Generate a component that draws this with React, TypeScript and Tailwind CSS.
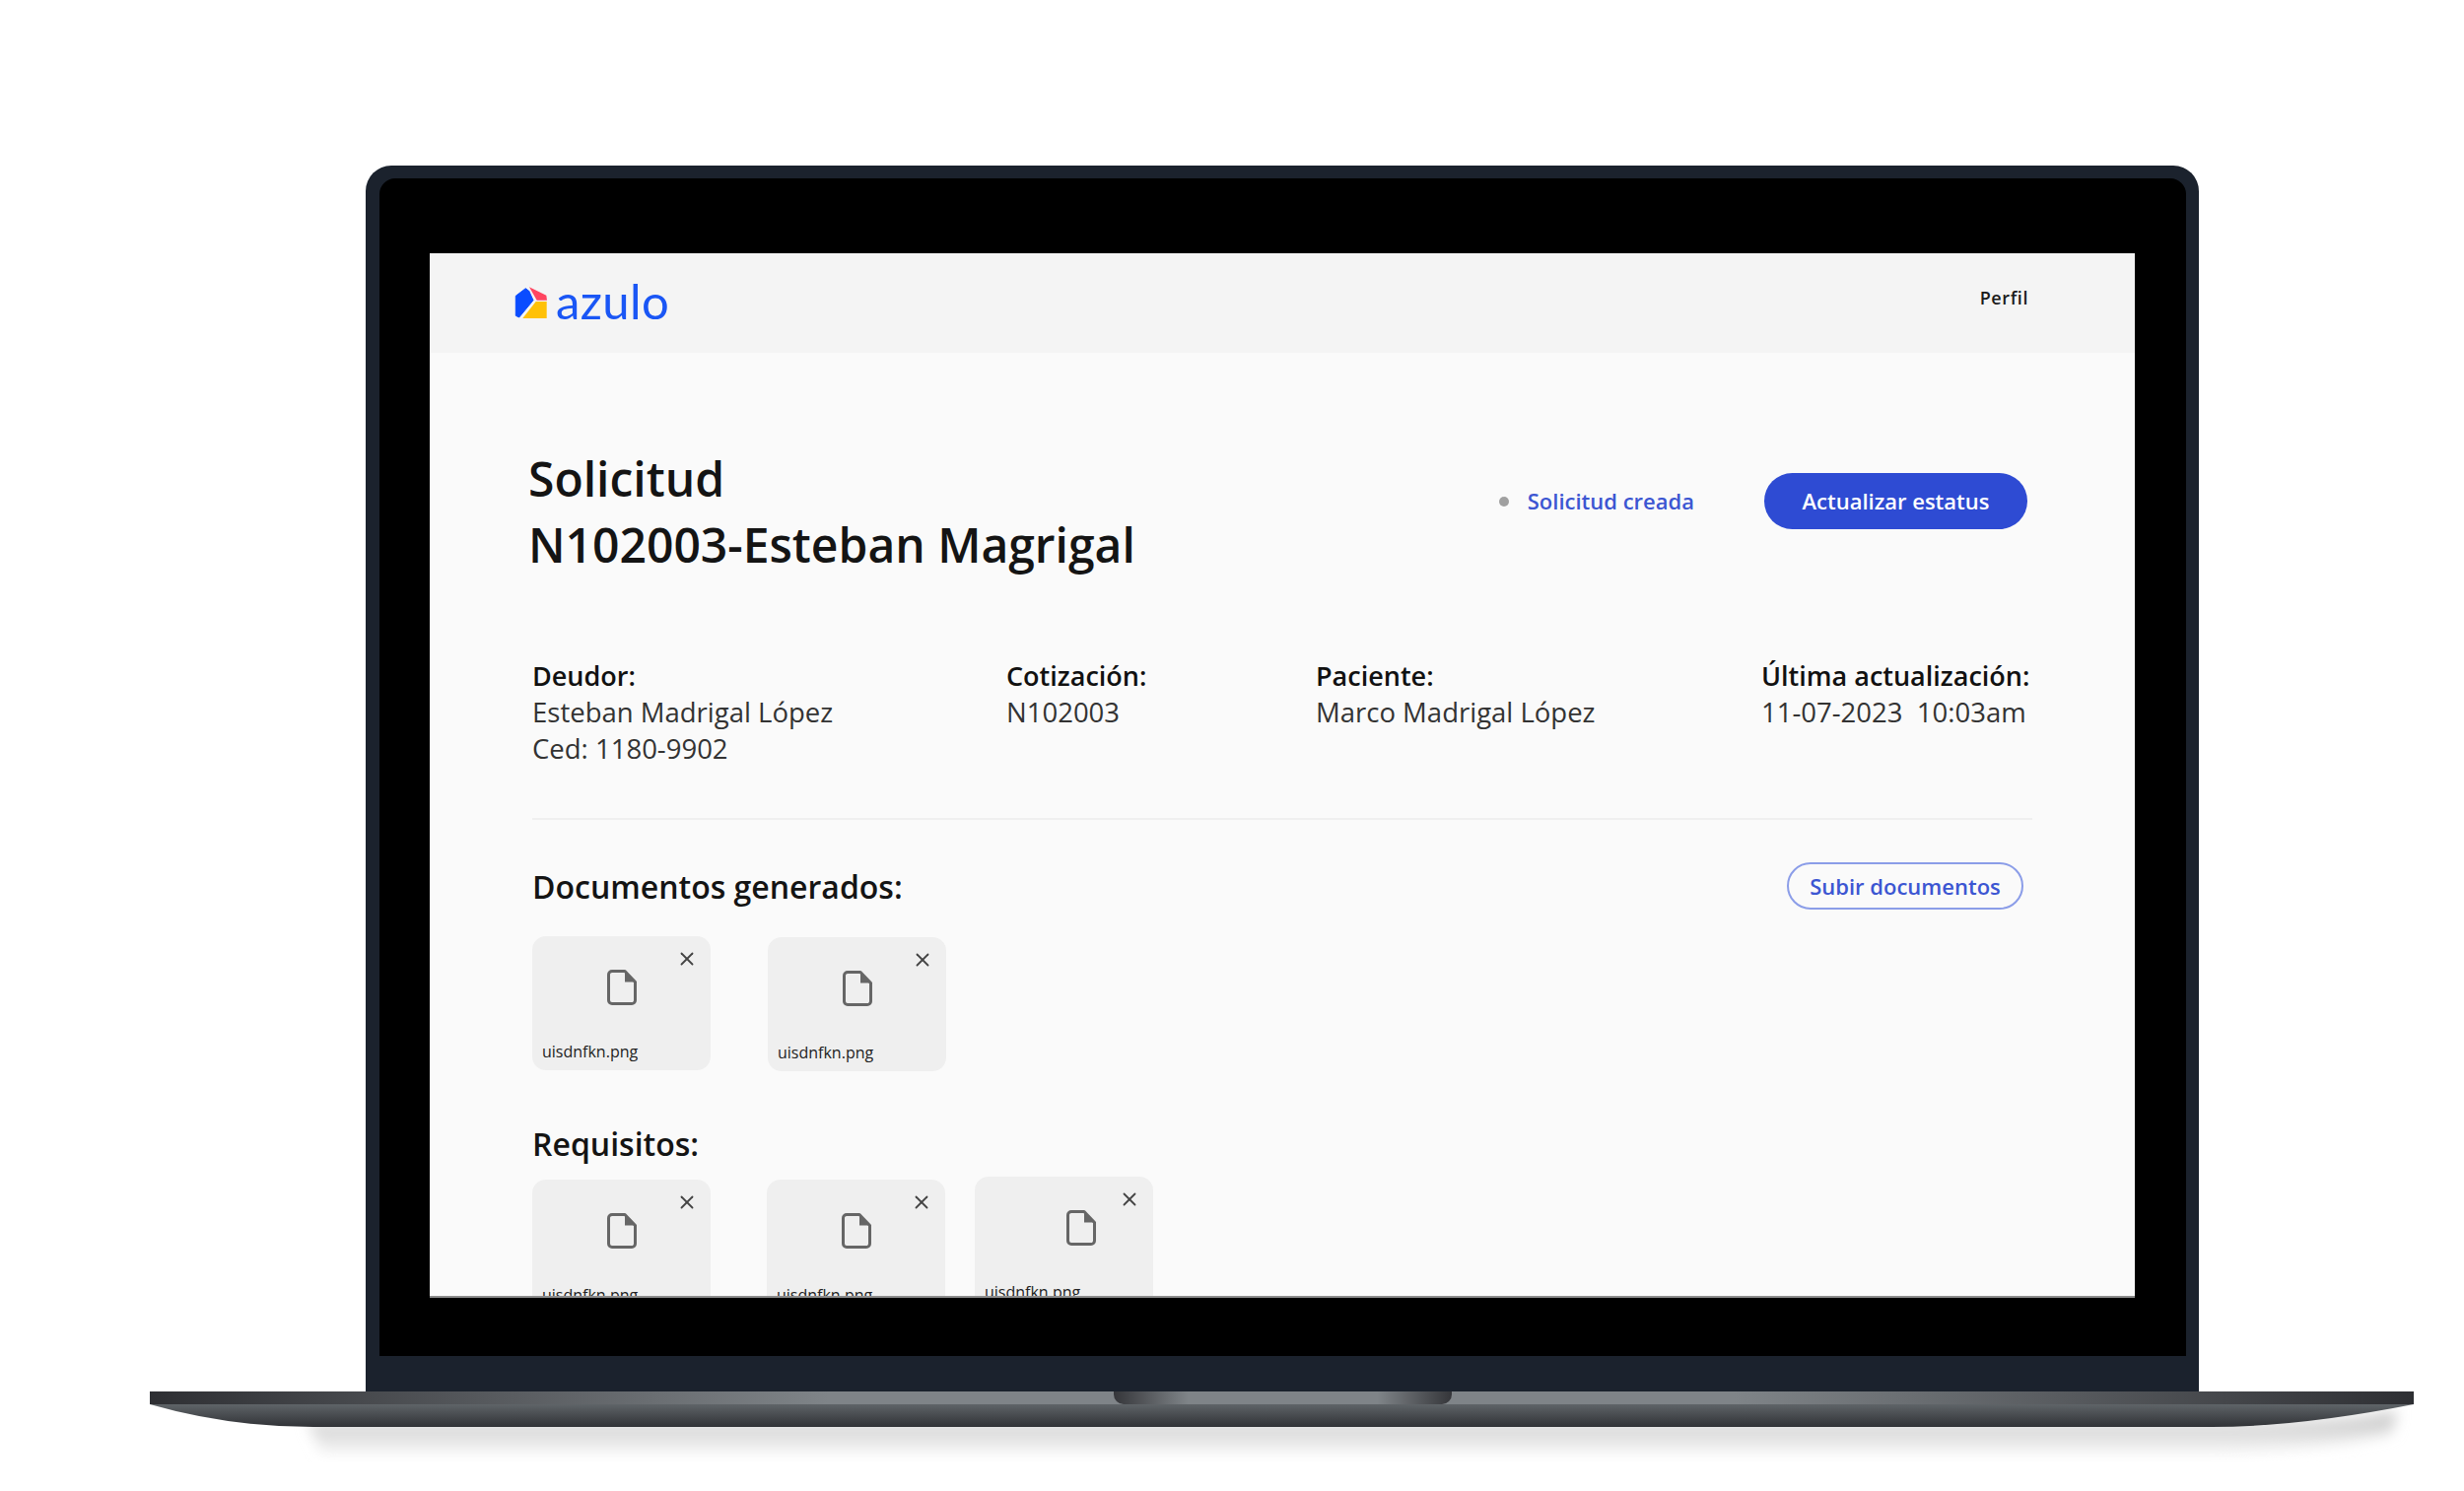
import { X } from 'lucide-react'

const FONT = 'font-["Open_Sans","Noto_Sans",sans-serif]'

const INFO = [
  { label: 'Deudor:', lines: ['Esteban Madrigal López', 'Ced: 1180-9902'], width: 'w-[481px]' },
  { label: 'Cotización:', lines: ['N102003'], width: 'w-[314px]' },
  { label: 'Paciente:', lines: ['Marco Madrigal López'], width: 'w-[452px]' },
  { label: 'Última actualización:', lines: ['11-07-2023\u00a0\u00a010:03am'], width: 'w-[275px]' },
]

function Logo() {
  return (
    <div className="flex items-end gap-[7px]">
      <svg width="35" height="36" viewBox="0 0 35 36" className="mb-[7px]">
        <path d="M1.3 10.3 11.3 2.7 14.7 5.3 19 14.7 4.7 32 1.3 30.3Z" fill="#0a4cff" stroke="#0a4cff" strokeWidth="1" strokeLinejoin="round" />
        <path d="M15 1.3 32.3 9.7 33 14.7 22.7 14.7Z" fill="#ff4560" />
        <path d="M21.7 16 32.7 16 32.7 33 8.3 33Z" fill="#ffc107" />
      </svg>
      <span className='font-["Lato",sans-serif] text-[49px] leading-[45px] tracking-[0.4px] text-[#1a56f5] mb-[5px]'>azulo</span>
    </div>
  )
}

function FileGlyph() {
  return (
    <svg width="30" height="36" viewBox="0 0 30 36" fill="none">
      <path d="M5 1.5H18L28.5 12.5V31A3.5 3.5 0 0 1 25 34.5H5A3.5 3.5 0 0 1 1.5 31V5A3.5 3.5 0 0 1 5 1.5Z" stroke="#666" strokeWidth="3" strokeLinejoin="round" />
      <path d="M18 2V12.5H28Z" fill="#666" />
    </svg>
  )
}

function DocCard({ className, iconClass = 'pt-[34px]' }: { className: string; iconClass?: string }) {
  return (
    <div className={`relative w-[181px] h-[136px] shrink-0 rounded-[14px] bg-[#efefef] ${className}`}>
      <X size={22} strokeWidth={2} className="absolute right-[13px] top-[12px] text-[#444]" />
      <div className={`flex justify-center ${iconClass}`}>
        <FileGlyph />
      </div>
      <p className="pl-[10px] pt-[36px] text-[16px] font-medium leading-[22px] text-[#222]">uisdnfkn.png</p>
    </div>
  )
}

function LaptopBase() {
  return (
    <svg width="2297" height="72" viewBox="0 0 2297 72" className="block ml-[152px]">
      <defs>
        <linearGradient id="lip" x1="0" x2="1" y1="0" y2="0">
          <stop offset="0" stopColor="#2e2f33" />
          <stop offset="0.3" stopColor="#7f8488" />
          <stop offset="0.7" stopColor="#7f8488" />
          <stop offset="1" stopColor="#2e2f33" />
        </linearGradient>
        <linearGradient id="belly" x1="0" x2="0" y1="0" y2="1">
          <stop offset="0" stopColor="#5f6468" />
          <stop offset="1" stopColor="#303236" />
        </linearGradient>
        <linearGradient id="notch" x1="0" x2="1" y1="0" y2="0">
          <stop offset="0" stopColor="#35363a" />
          <stop offset="0.22" stopColor="#7f8488" />
          <stop offset="0.78" stopColor="#7f8488" />
          <stop offset="1" stopColor="#35363a" />
        </linearGradient>
        <linearGradient id="drop" x1="0" x2="0" y1="0" y2="1">
          <stop offset="0" stopColor="#c4c4c4" />
          <stop offset="1" stopColor="#f4f4f4" />
        </linearGradient>
        <filter id="soft" x="-5%" y="-100%" width="110%" height="300%">
          <feGaussianBlur stdDeviation="7" />
        </filter>
      </defs>
      <path d="M160 32H2110Q2230 30 2280 20L2275 42Q2200 60 2100 62H175Z" fill="url(#drop)" filter="url(#soft)" />
      <rect x="0" y="0" width="2297" height="13" fill="url(#lip)" />
      <path d="M0 13H2297Q2180 36 2092 36H166Q80 36 0 13Z" fill="url(#belly)" />
      <path d="M978 0H1321V3A10 10 0 0 1 1311 13H988A10 10 0 0 1 978 3Z" fill="url(#notch)" />
    </svg>
  )
}

export default function App() {
  return (
    <div className={`h-[1513px] w-[2500px] overflow-hidden bg-white pt-[168px] ${FONT}`}>
      {/* lid */}
      <div className="ml-[371px] h-[1244px] w-[1860px] rounded-t-[26px] bg-[#1b222d] pl-[14px] pr-[13px] pt-[13px]">
        <div className="h-[1195px] rounded-t-[16px] bg-black pl-[51px] pr-[52px] pt-[76px]">
          {/* screen */}
          <div className="h-[1060px] overflow-hidden border-b-2 border-[#8c8c8c] bg-[#fafafa]">
            <header className="flex h-[101px] items-center justify-between bg-[#f4f4f4] pl-[86px] pr-[108px]">
              <Logo />
              <span className="mb-[10px] text-[18px] font-semibold tracking-[0.6px] text-[#1a1a1a]">Perfil</span>
            </header>

            <main className="pl-[104px] pr-[104px] pt-[95px]">
              <div className="flex items-start justify-between">
                <h1 className="-ml-[4px] -mt-[1px] text-[48px] font-semibold leading-[67px] text-[#141414]">
                  Solicitud
                  <br />
                  N102003-Esteban Magrigal
                </h1>
                <div className="mr-[5px] mt-[27px] flex items-center">
                  <span className="h-[10px] w-[10px] rounded-full bg-[#a0a0a0]" />
                  <span className="ml-[19px] -mt-[1px] text-[22px] font-semibold text-[#3c56d2]">Solicitud creada</span>
                  <button className="ml-[71px] h-[57px] w-[267px] rounded-full bg-[#2e4bd3] text-[22px] font-semibold text-white">
                    Actualizar estatus
                  </button>
                </div>
              </div>

              <div className="mt-[81px] flex">
                {INFO.map((item) => (
                  <div key={item.label} className={`${item.width} shrink-0 whitespace-nowrap text-[27.5px] leading-[37px]`}>
                    <p className="text-[27px] font-semibold text-[#111]">{item.label}</p>
                    {item.lines.map((line) => (
                      <p key={line} className="text-[#333]">{line}</p>
                    ))}
                  </div>
                ))}
              </div>
              <div className="mt-[52px] h-[2px] bg-[#efefef]" />

              <div className="mt-[44px] flex items-center justify-between">
                <h2 className="text-[32px] font-semibold leading-[48px] text-[#141414]">Documentos generados:</h2>
                <button className="mr-[9px] -mt-[2px] h-[48px] w-[240px] rounded-full border-2 border-[#8b9de8] text-[22px] font-semibold text-[#3c56d2]">
                  Subir documentos
                </button>
              </div>
              <div className="mt-[26px] flex items-start">
                <DocCard className="" />
                <DocCard className="ml-[58px] mt-px" />
              </div>

              <h2 className="mt-[52px] text-[32px] font-semibold leading-[44px] text-[#141414]">Requisitos:</h2>
              <div className="mt-[14px] flex items-start">
                <DocCard className="" />
                <DocCard className="ml-[57px]" />
                <DocCard className="ml-[30px] -mt-[3px]" iconClass="pt-[34px] pl-[34px]" />
              </div>
            </main>
          </div>
        </div>
      </div>
      <LaptopBase />
    </div>
  )
}
